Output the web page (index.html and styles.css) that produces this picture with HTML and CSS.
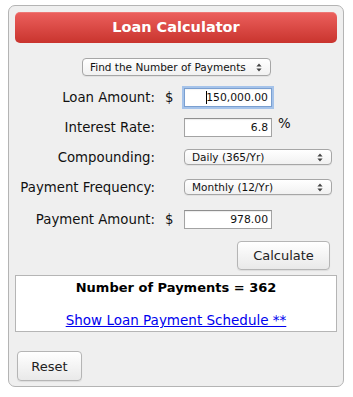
FILE: index.html
```html
<!DOCTYPE html>
<html>
<head>
<meta charset="utf-8">
<title>Loan Calculator</title>
<link rel="stylesheet" href="styles.css">
</head>
<body>
<div class="panel">
  <div class="header">Loan Calculator</div>

  <div class="mode-row">
    <div class="select select-mode">
      <span>Find the Number of Payments</span>
      <svg class="arrows" width="6" height="9" viewBox="0 0 6 9"><path d="M3 0.5L5.6 3.6H0.4Z M3 8.5L5.6 5.4H0.4Z" fill="#444"/></svg>
    </div>
  </div>

  <div class="row row-first">
    <div class="label">Loan Amount:</div>
    <div class="cur">$</div>
    <div class="field-wrap">
      <input class="field focused" type="text" value="150,000.00" readonly>
      <span class="caret"></span>
    </div>
  </div>

  <div class="row">
    <div class="label">Interest Rate:</div>
    <div class="cur"></div>
    <input class="field" type="text" value="6.8" readonly>
    <div class="unit">%</div>
  </div>

  <div class="row">
    <div class="label">Compounding:</div>
    <div class="cur"></div>
    <div class="select select-wide">
      <span>Daily (365/Yr)</span>
      <svg class="arrows" width="6" height="9" viewBox="0 0 6 9"><path d="M3 0.5L5.6 3.6H0.4Z M3 8.5L5.6 5.4H0.4Z" fill="#444"/></svg>
    </div>
  </div>

  <div class="row">
    <div class="label">Payment Frequency:</div>
    <div class="cur"></div>
    <div class="select select-wide">
      <span>Monthly (12/Yr)</span>
      <svg class="arrows" width="6" height="9" viewBox="0 0 6 9"><path d="M3 0.5L5.6 3.6H0.4Z M3 8.5L5.6 5.4H0.4Z" fill="#444"/></svg>
    </div>
  </div>

  <div class="row row-last">
    <div class="label">Payment Amount:</div>
    <div class="cur">$</div>
    <input class="field" type="text" value="978.00" readonly>
  </div>

  <div class="calc-row">
    <button class="btn btn-calc" type="button">Calculate</button>
  </div>

  <div class="result">
    <div class="result-title">Number of Payments = 362</div>
    <a class="result-link" href="#">Show Loan Payment Schedule **</a>
  </div>

  <div class="reset-row">
    <button class="btn btn-reset" type="button">Reset</button>
  </div>
</div>
</body>
</html>
```

FILE: styles.css
```css
html, body {
  margin: 0;
  padding: 0;
  background: #ffffff;
}

body {
  font-family: "DejaVu Sans", Verdana, sans-serif;
  color: #111;
}

.panel {
  box-sizing: border-box;
  width: 336px;
  margin: 5px 0 0 8px;
  padding: 6px 6px 5px 6px;
  border: 1px solid #b4b4b4;
  border-radius: 7px;
  background: #efefef;
}

.header {
  height: 31px;
  line-height: 31px;
  border-radius: 5px;
  background: linear-gradient(#ec605d, #c9342e);
  color: #ffffff;
  font-weight: bold;
  font-size: 14.5px;
  text-align: center;
  box-shadow: inset 0 1px 0 rgba(255,255,255,0.15);
}

.mode-row {
  display: flex;
  justify-content: center;
  margin-top: 15px;
}

.select {
  box-sizing: border-box;
  display: flex;
  align-items: center;
  justify-content: space-between;
  border: 1px solid #a6a6a6;
  border-radius: 4px;
  background: linear-gradient(#ffffff, #f1f1f1);
  font-size: 10.5px;
  color: #111;
  box-shadow: 0 1px 0 rgba(0,0,0,0.05);
}

.select-mode {
  width: 189px;
  height: 18px;
  padding: 0 8px 0 7px;
  margin-left: 1px;
}

.select-wide {
  width: 148px;
  height: 16px;
  padding: 0 8px 0 7px;
}

.arrows {
  display: block;
}

.row {
  display: flex;
  align-items: center;
  height: 30px;
  font-size: 13.3px;
}

.row-first {
  margin-top: 6px;
}

.row-last {
  margin-top: 2px;
}

.label {
  width: 140px;
  text-align: right;
  white-space: nowrap;
}

.cur {
  box-sizing: border-box;
  width: 29px;
  padding-left: 10px;
}

.field-wrap {
  position: relative;
  display: flex;
}

.field {
  box-sizing: border-box;
  width: 88px;
  height: 19px;
  margin: 0;
  padding: 0 3px 0 2px;
  border: 1px solid #a3a3a3;
  border-top-color: #8e8e8e;
  background: #ffffff;
  font-family: "DejaVu Sans", Verdana, sans-serif;
  font-size: 10.8px;
  color: #111;
  text-align: right;
  outline: none;
  box-shadow: inset 0 1px 1px rgba(0,0,0,0.08);
}

.field.focused {
  border: 1px solid #7a9fd0;
  box-shadow: 0 0 0 2px #a5c3ea, inset 0 1px 1px rgba(0,0,0,0.05);
}

.caret {
  position: absolute;
  left: 22px;
  top: 3px;
  width: 1px;
  height: 13px;
  background: #000;
}

.unit {
  margin-left: 6px;
  font-size: 13.3px;
  align-self: flex-start;
  margin-top: 4px;
}

.calc-row {
  display: flex;
  justify-content: flex-end;
  margin-top: 7px;
  padding-right: 7px;
}

.btn {
  box-sizing: border-box;
  margin: 0;
  border: 1px solid #b5b5b5;
  border-radius: 4px;
  background: linear-gradient(#ffffff, #e9e9e9);
  font-family: "DejaVu Sans", Verdana, sans-serif;
  font-size: 13px;
  color: #222;
  box-shadow: 0 1px 1px rgba(0,0,0,0.08);
}

.btn-calc {
  width: 93px;
  height: 29px;
}

.result {
  box-sizing: border-box;
  height: 57px;
  margin-top: 5px;
  border: 1px solid #b5b5b5;
  background: #ffffff;
  text-align: center;
}

.result-title {
  margin-top: 4px;
  font-size: 13px;
  font-weight: bold;
  color: #000;
  line-height: 16px;
}

.result-link {
  display: inline-block;
  margin-top: 16px;
  font-size: 13.5px;
  line-height: 16px;
  color: #0000ee;
  text-decoration: underline;
}

.reset-row {
  display: flex;
  margin-top: 19px;
  padding-left: 2px;
}

.btn-reset {
  width: 65px;
  height: 30px;
}
```
